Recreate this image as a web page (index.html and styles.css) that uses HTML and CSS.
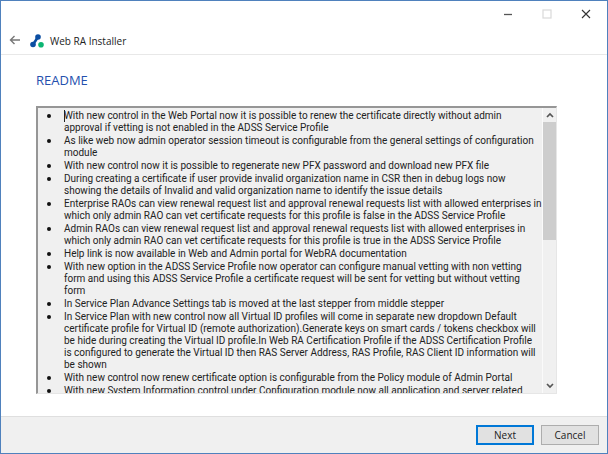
FILE: index.html
```html
<!DOCTYPE html>
<html lang="en">
<head>
    <meta charset="UTF-8">
    <meta name="viewport" content="width=device-width, initial-scale=1.0">
    <title>Web RA Installer</title>
    <link rel="stylesheet" href="styles.css">
</head>
<body>
    <div class="window">
        <div class="titlebar">
            <button type="button" aria-label="Minimize">
                <svg width="10" height="10" viewBox="0 0 10 10"><path d="M1 5.5h8" stroke="#555" stroke-width="1.3"/></svg>
            </button>
            <button type="button" aria-label="Maximize" disabled>
                <svg width="10" height="10" viewBox="0 0 10 10"><rect x="1" y="1" width="8" height="8" fill="none" stroke="#d9d9d9" stroke-width="1.2"/></svg>
            </button>
            <button type="button" aria-label="Close">
                <svg width="10" height="10" viewBox="0 0 10 10"><path d="M1 1l8 8M9 1L1 9" stroke="#333" stroke-width="1.1"/></svg>
            </button>
        </div>
        <header class="header">
            <button class="back" type="button" aria-label="Back">
                <svg width="12" height="12" viewBox="0 0 12 12"><path d="M11 5H1.5M5.5 1L1.5 5l4 4" fill="none" stroke="#777" stroke-width="1.4"/></svg>
            </button>
            <svg class="logo" width="14" height="14" viewBox="0 0 14 14">
                <path d="M8 3L3 10.5" stroke="#0b4ea2" stroke-width="2.6"/>
                <circle cx="8" cy="3" r="2.8" fill="#0b4ea2"/>
                <circle cx="3" cy="10.5" r="2.8" fill="#0b4ea2"/>
                <circle cx="11" cy="10.8" r="2.8" fill="#0cb573"/>
            </svg>
            <span class="title">Web RA Installer</span>
        </header>
        <main class="content">
            <h1>README</h1>
            <div class="readme">
                <ul class="notes">
                    <li><span class="caret"></span>With new control in the Web Portal now it is possible to renew the certificate directly without admin<br>approval if vetting is not enabled in the ADSS Service Profile</li>
                    <li>As like web now admin operator session timeout is configurable from the general settings of configuration<br>module</li>
                    <li>With new control now it is possible to regenerate new PFX password and download new PFX file</li>
                    <li>During creating a certificate if user provide invalid organization name in CSR then in debug logs now<br>showing the details of Invalid and valid organization name to identify the issue details</li>
                    <li>Enterprise RAOs can view renewal request list and approval renewal requests list with allowed enterprises in<br>which only admin RAO can vet certificate requests for this profile is false in the ADSS Service Profile</li>
                    <li>Admin RAOs can view renewal request list and approval renewal requests list with allowed enterprises in<br>which only admin RAO can vet certificate requests for this profile is true in the ADSS Service Profile</li>
                    <li>Help link is now available in Web and Admin portal for WebRA documentation</li>
                    <li>With new option in the ADSS Service Profile now operator can configure manual vetting with non vetting<br>form and using this ADSS Service Profile a certificate request will be sent for vetting but without vetting<br>form</li>
                    <li>In Service Plan Advance Settings tab is moved at the last stepper from middle stepper</li>
                    <li>In Service Plan with new control now all Virtual ID profiles will come in separate new dropdown Default<br>certificate profile for Virtual ID (remote authorization).Generate keys on smart cards / tokens checkbox will<br>be hide during creating the Virtual ID profile.In Web RA Certification Profile if the ADSS Certification Profile<br>is configured to generate the Virtual ID then RAS Server Address, RAS Profile, RAS Client ID information will<br>be shown</li>
                    <li>With new control now renew certificate option is configurable from the Policy module of Admin Portal</li>
                    <li>With new System Information control under Configuration module now all application and server related</li>
                </ul>
                <div class="scrollbar">
                    <button type="button" aria-label="Scroll up">
                        <svg width="8" height="6" viewBox="0 0 8 6"><path d="M1 5l3-3 3 3" fill="none" stroke="#555" stroke-width="1.7"/></svg>
                    </button>
                    <div class="track"><div class="thumb"></div></div>
                    <button type="button" aria-label="Scroll down">
                        <svg width="8" height="6" viewBox="0 0 8 6"><path d="M1 1l3 3 3-3" fill="none" stroke="#555" stroke-width="1.7"/></svg>
                    </button>
                </div>
            </div>
        </main>
        <footer class="footer">
            <button class="btn primary" type="button">Next</button>
            <button class="btn" type="button">Cancel</button>
        </footer>
    </div>
</body>
</html>
```
FILE: styles.css
```css
* {
    box-sizing: border-box;
}
body {
    margin: 0;
    font-family: "Open Sans", "Noto Sans", sans-serif;
    font-size: 10px;
    color: #222;
}
button {
    padding: 0;
    border: none;
    background: none;
    font: inherit;
    color: inherit;
}
svg {
    display: block;
}
.window {
    display: flex;
    flex-direction: column;
    height: 100vh;
    border: 1px solid #4f81bd;
    background: #fff;
}
.titlebar {
    display: flex;
    justify-content: flex-end;
    height: 26px;
    padding-right: 2px;
}
.titlebar button {
    display: grid;
    place-items: center;
    width: 39px;
}
.header {
    display: flex;
    align-items: center;
    height: 28px;
    padding: 0 8px;
    border-bottom: 1px solid #e8e8e8;
}
.back {
    margin-right: 9px;
}
.logo {
    margin-right: 6px;
}
.content {
    display: flex;
    flex: 1;
    flex-direction: column;
    min-height: 0;
    padding: 16px 50px 22px 35px;
}
h1 {
    margin: 0 0 17px;
    font-size: 13px;
    font-weight: 400;
    line-height: 18px;
    color: #2450ae;
}
.readme {
    display: flex;
    flex: 1;
    min-height: 0;
    border: 1px solid #e6e6e6;
    border-top: 2px solid #969696;
    border-left: 2px solid #969696;
    background: #f0f0f0;
}
.notes {
    flex: 1;
    min-width: 0;
    margin: 0;
    padding: 2px 0 0 26px;
    overflow: hidden;
    font-family: Roboto, "Open Sans", sans-serif;
    line-height: 12px;
    white-space: nowrap;
    list-style: none;
}
.notes li {
    position: relative;
    margin-bottom: 1px;
}
.notes li::before {
    content: "";
    position: absolute;
    top: 4px;
    left: -17px;
    width: 4px;
    height: 4px;
    border-radius: 50%;
    background: #111;
}
.caret {
    position: absolute;
    top: 0;
    left: 0;
    width: 1px;
    height: 12px;
    background: #222;
}
.scrollbar {
    display: flex;
    flex-direction: column;
    width: 14px;
    border-left: 1px solid #fafafa;
}
.scrollbar button {
    display: grid;
    place-items: center;
    height: 14px;
}
.track {
    flex: 1;
}
.thumb {
    height: 46%;
    background: #cdcdcd;
}
.footer {
    display: flex;
    justify-content: flex-end;
    gap: 7px;
    padding: 8px;
    border-top: 1px solid #dfdfdf;
    background: #f0f0f0;
}
.btn {
    width: 58px;
    height: 20px;
    border: 1px solid #adadad;
    background: #e1e1e1;
    line-height: 16px;
}
.btn.primary {
    border: 2px solid #0078d7;
}
```
